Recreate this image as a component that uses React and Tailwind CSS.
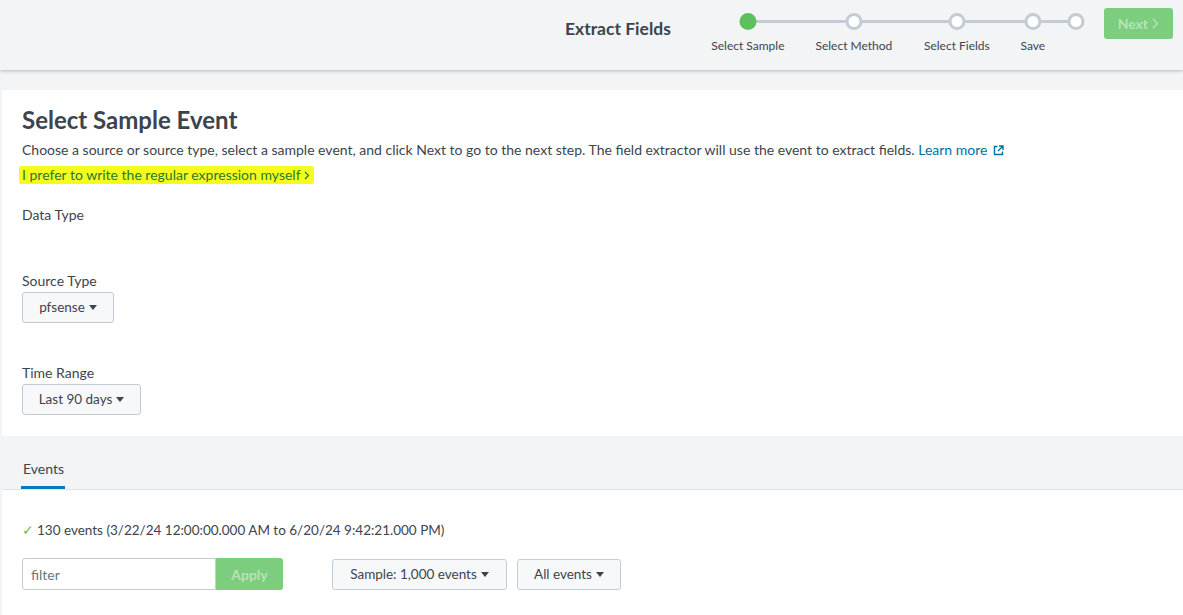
import React from 'react';

const font = { fontFamily: 'Lato, "Open Sans", sans-serif' };

function Caret() {
  return (
    <svg width="8" height="5" viewBox="0 0 8 5" className="ml-1 inline-block">
      <path d="M0 0h8L4 5z" fill="currentColor" />
    </svg>
  );
}

function Dropdown({ label, className = '' }) {
  return (
    <button
      type="button"
      className={`h-[31px] px-[14px] flex items-center justify-center bg-[#f7f8fa] border border-[#c3cbd4] rounded-[3px] text-[13.5px] text-[#3c444d] ${className}`}
    >
      {label}
      <Caret />
    </button>
  );
}

const steps = [
  { label: 'Select Sample', active: true },
  { label: 'Select Method' },
  { label: 'Select Fields' },
  { label: 'Save' },
];

export default function App() {
  return (
    <div className="w-[1183px] h-[615px] overflow-hidden bg-[#f2f4f5] text-[#3c444d]" style={font}>
      <header className="h-[70px] flex items-start bg-[#f2f4f5] shadow-[0_1px_3px_rgba(120,135,155,0.55)] relative z-10">
        <h1 className="ml-[565px] mt-[16px] text-[17.5px] font-bold text-[#3c444d]">Extract Fields</h1>
        <div className="ml-[40px] mt-[12px] relative w-[380px] h-[50px]">
          <div className="absolute left-[37px] top-[8px] w-[330px] h-[3px] bg-[#c3cbd4]" />
          {[37, 143, 246, 322, 365].map((x, i) => (
            <div
              key={x}
              className={`absolute top-[1px] w-[17px] h-[17px] rounded-full -translate-x-1/2 ${
                i === 0 ? 'bg-[#5cc05c]' : 'bg-white border-[3px] border-[#c3cbd4]'
              }`}
              style={{ left: x }}
            />
          ))}
          {steps.map((s, i) => (
            <span
              key={s.label}
              className="absolute top-[25px] -translate-x-1/2 whitespace-nowrap text-[12px] text-[#3c444d]"
              style={{ left: [37, 143, 246, 322][i] }}
            >
              {s.label}
            </span>
          ))}
        </div>
        <button
          type="button"
          className="ml-[13px] mt-[8px] w-[69px] h-[31px] rounded-[3px] bg-[#7dcd7e] text-[#b5e4b5] text-[14px] font-bold flex items-center justify-center"
        >
          Next
          <svg width="7" height="11" viewBox="0 0 7 11" className="ml-[4px]">
            <path d="M1 1l4.5 4.5L1 10" stroke="currentColor" strokeWidth="1.4" fill="none" />
          </svg>
        </button>
      </header>

      <main className="mt-[20px] ml-[2px] bg-white">
        <section className="pl-[20px] pt-[15px] pb-[21px]">
          <h2 className="text-[24px] font-bold leading-[30px] text-[#3c444d]">Select Sample Event</h2>
          <p className="mt-[6px] text-[14px] leading-[18px]">
            Choose a source or source type, select a sample event, and click Next to go to the next step. The field
            extractor will use the event to extract fields.{' '}
            <a className="text-[#006eaa]">
              Learn more
              <svg width="11" height="11" viewBox="0 0 11 11" className="inline-block ml-[6px] -mt-[2px]">
                <path d="M4.5 1.5H1.5v8h8v-3M6 1h4v4M10 1L5 6" stroke="currentColor" strokeWidth="1.4" fill="none" />
              </svg>
            </a>
          </p>
          <div className="mt-[3px]">
            <span className="inline-block -ml-[3px] pl-[3px] pr-[4px] bg-[#f6fc1e] rounded-[2px] text-[14px] leading-[18px] text-[#1f7a2e]">
              I prefer to write the regular expression myself
              <svg width="6" height="9" viewBox="0 0 6 9" className="inline-block ml-[3px] -mt-[1px]">
                <path d="M1 1l3.5 3.5L1 8" stroke="currentColor" strokeWidth="1.2" fill="none" />
              </svg>
            </span>
          </div>

          <div className="mt-[20px] text-[14px] leading-[18px]">Data Type</div>

          <div className="mt-[48px] text-[14px] leading-[18px]">Source Type</div>
          <Dropdown label="pfsense" className="mt-[2px] w-[92px]" />

          <div className="mt-[41px] text-[14px] leading-[18px]">Time Range</div>
          <Dropdown label="Last 90 days" className="mt-[2px] w-[119px]" />
        </section>

        <div className="bg-[#f2f4f5] h-[54px] pl-[20px] flex items-end border-b border-[#dfe3e8]">
          <div>
            <div className="text-[14px] leading-[18px] px-[1px] mb-[8px]">Events</div>
            <div className="h-[3px] w-[44px] -ml-[1px] bg-[#0a78c2]" />
          </div>
        </div>

        <section className="pl-[20px] pt-[31px] pb-[40px]">
          <div className="text-[13.5px] leading-[18px]">
            <span className="text-[#5cc05c] mr-[3px]">✓</span>
            130 events (3/22/24 12:00:00.000 AM to 6/20/24 9:42:21.000 PM)
          </div>
          <div className="mt-[19px] flex items-center">
            <div className="flex">
              <input
                placeholder="filter"
                className="w-[194px] h-[32px] px-[8px] border border-[#c3cbd4] rounded-l-[3px] text-[14px] placeholder:text-[#6b7785] outline-none"
              />
              <button
                type="button"
                className="w-[67px] h-[32px] rounded-r-[3px] bg-[#7dcd7e] text-[#b5e4b5] text-[14px] font-bold"
              >
                Apply
              </button>
            </div>
            <Dropdown label="Sample: 1,000 events" className="ml-[49px] w-[175px]" />
            <Dropdown label="All events" className="ml-[10px] w-[104px]" />
          </div>
        </section>
      </main>
    </div>
  );
}
